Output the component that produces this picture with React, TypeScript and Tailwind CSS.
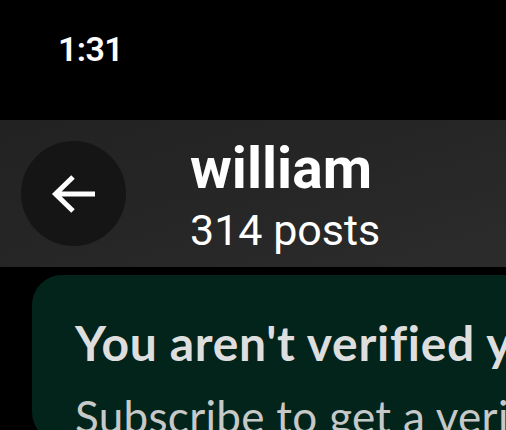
import React from "react"

const BackArrow = () => (
	<svg width="46" height="40" viewBox="0 0 46 40" fill="none">
		<path
			d="M44 20H5M22 3L4.5 20L22 37"
			stroke="white"
			strokeWidth="5"
			strokeLinecap="butt"
			strokeLinejoin="miter"
		/>
	</svg>
)

export default function App() {
	return (
		<div className="h-[430px] w-[506px] overflow-hidden bg-black font-['Roboto',sans-serif]">
			{/* Status bar */}
			<div className="flex h-[120px] items-start pl-[58px] pt-[24px]">
				<span className="text-[34px] font-semibold tracking-[-0.6px] text-white">1:31</span>
			</div>

			{/* Profile header */}
			<div className="flex h-[147px] items-start bg-gradient-to-br from-[#222222] via-[#262626] to-[#2c2c2c] pl-[21px]">
				<div className="mt-[21px] flex h-[105px] w-[105px] items-center justify-center rounded-full bg-[#151515]">
					<BackArrow />
				</div>
				<div className="ml-[64px] flex flex-col pt-[20px]">
					<span className="text-[57px] font-bold leading-[58px] text-white">william</span>
					<span className="mt-[8px] text-[43px] leading-[48px] text-white">314 posts</span>
				</div>
			</div>

			{/* Verification card */}
			<div className="pl-[32px] pt-[8px]">
				<div className="w-[560px] rounded-[30px] bg-[#02241b] pl-[43px] pt-[40px] font-['Lato',sans-serif]">
					<div className="whitespace-nowrap text-[48px] font-bold leading-[56px] tracking-[0.7px] text-[#dedede]">
						You aren't verified yet
					</div>
					<div className="mt-[19px] whitespace-nowrap text-[44px] leading-[52px] tracking-[0.3px] text-[#c6c9c7]">
						Subscribe to get a verified checkmark
					</div>
				</div>
			</div>
		</div>
	)
}
